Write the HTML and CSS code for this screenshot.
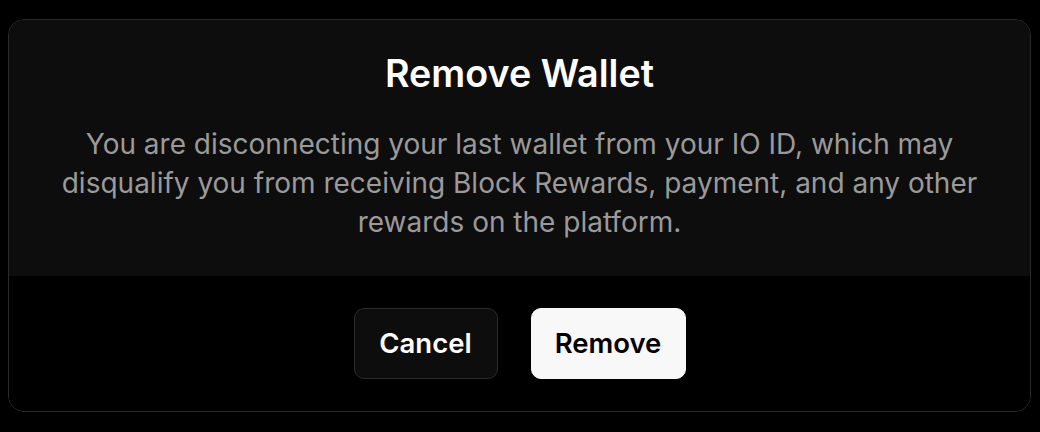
FILE: index.html
```html
<!DOCTYPE html>
<html lang="en">
<head>
    <meta charset="UTF-8">
    <meta name="viewport" content="width=device-width, initial-scale=1.0">
    <title>Remove Wallet</title>
    <link rel="stylesheet" href="styles.css">
</head>
<body>
    <div class="modal">
        <div class="modal-body">
            <h1>Remove Wallet</h1>
            <p>You are disconnecting your last wallet from your IO ID, which may disqualify you from receiving Block Rewards, payment, and any other rewards on the platform.</p>
        </div>
        <div class="modal-footer">
            <button class="btn btn-cancel">Cancel</button>
            <button class="btn btn-remove">Remove</button>
        </div>
    </div>
</body>
</html>
```

FILE: styles.css
```css
body {
    font-family: Inter, "Noto Sans", sans-serif;
    background-color: #000;
    margin: 0;
    padding: 19px 9px 0 8px;
    height: 432px;
    box-sizing: border-box;
}

.modal {
    height: 393px;
    border: 1px solid #2b2b2b;
    border-radius: 16px;
    overflow: hidden;
    display: flex;
    flex-direction: column;
    box-sizing: border-box;
}

.modal-body {
    background-color: #0d0d0d;
    padding: 31px 40px 0;
    height: 256px;
    box-sizing: border-box;
    text-align: center;
}

h1 {
    color: #fff;
    font-size: 37.7px;
    font-weight: 600;
    line-height: 44px;
    margin: 0 0 30px;
}

p {
    color: #9a9a9a;
    font-size: 28px;
    line-height: 39px;
    margin: 0;
}

.modal-footer {
    flex: 1;
    background-color: #000;
    display: flex;
    justify-content: center;
    align-items: center;
    gap: 33px;
}

.btn {
    font-family: inherit;
    font-size: 27.5px;
    font-weight: 600;
    height: 71px;
    padding: 0 0 2px;
    border-radius: 10px;
    cursor: pointer;
}

.btn-cancel {
    width: 144px;
    background-color: #0d0d0d;
    border: 1px solid #2b2b2b;
    color: #fff;
}

.btn-remove {
    width: 155px;
    background-color: #f8f8f8;
    border: 1px solid #f8f8f8;
    color: #000;
}
```
